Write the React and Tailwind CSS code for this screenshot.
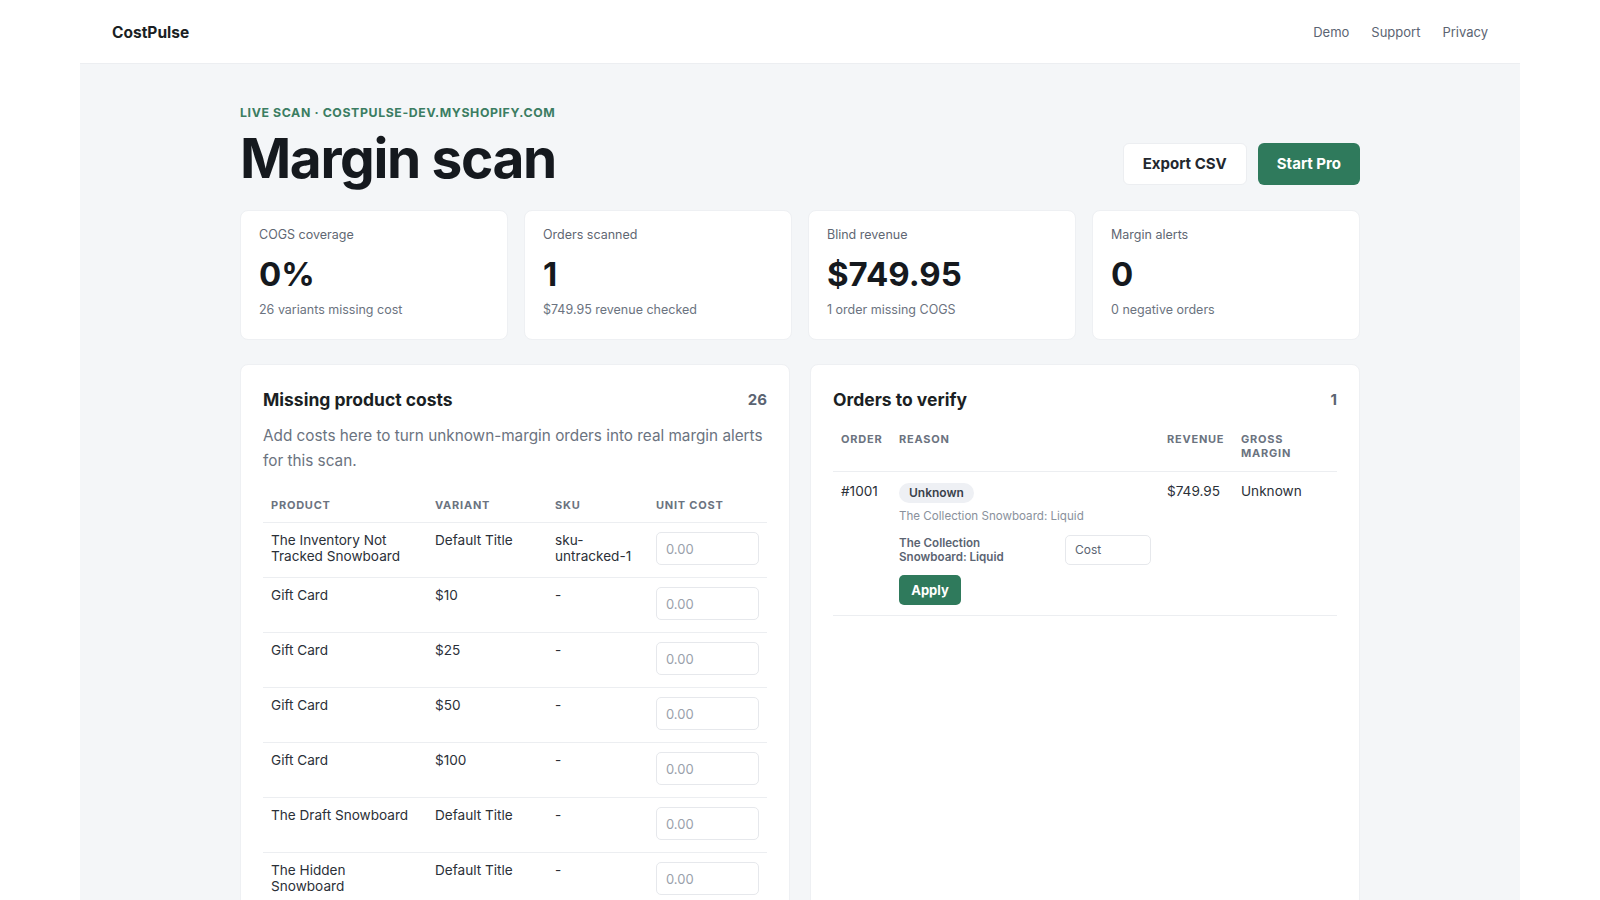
import React from 'react';

const stats = [
  { label: 'COGS coverage', value: '0%', note: '26 variants missing cost' },
  { label: 'Orders scanned', value: '1', note: '$749.95 revenue checked' },
  { label: 'Blind revenue', value: '$749.95', note: '1 order missing COGS' },
  { label: 'Margin alerts', value: '0', note: '0 negative orders' },
];

const products = [
  { product: 'The Inventory Not Tracked Snowboard', variant: 'Default Title', sku: 'sku-untracked-1' },
  { product: 'Gift Card', variant: '$10', sku: '-' },
  { product: 'Gift Card', variant: '$25', sku: '-' },
  { product: 'Gift Card', variant: '$50', sku: '-' },
  { product: 'Gift Card', variant: '$100', sku: '-' },
  { product: 'The Draft Snowboard', variant: 'Default Title', sku: '-' },
  { product: 'The Hidden Snowboard', variant: 'Default Title', sku: '-' },
  { product: 'The Minimal Snowboard', variant: 'Default Title', sku: '-' },
];

function App() {
  return (
    <div className="min-h-screen bg-white font-['Inter','Liberation_Sans',sans-serif] text-[#1b1f24]">
      <div className="max-w-[1440px] mx-auto">
        {/* Top bar */}
        <header className="h-[64px] px-8 flex items-center justify-between border-b border-[#eceef1]">
          <div className="text-[15.5px] font-bold text-[#1b1f24] mt-[2px]">CostPulse</div>
          <nav className="flex items-center gap-[22px] text-[13px] text-[#5b6472] mt-[2px]">
            <span>Demo</span>
            <span>Support</span>
            <span>Privacy</span>
          </nav>
        </header>

        <main className="bg-[#f4f6f8] pt-10 pb-16">
          <div className="max-w-[1120px] mx-auto">
            {/* Title row */}
            <div className="flex items-end justify-between">
              <div>
                <div className="text-[12.3px] font-bold tracking-[0.05em] text-[#3b7d62] uppercase">
                  Live scan · costpulse-dev.myshopify.com
                </div>
                <h1 className="mt-[6px] text-[55px] leading-[60px] font-bold tracking-[-0.025em] text-[#15191e]">
                  Margin scan
                </h1>
              </div>
              <div className="flex items-center gap-[11px] mb-[3px]">
                <button className="h-[42px] px-[19px] rounded-md bg-white border border-[#eceef1] text-[15px] font-bold text-[#23282f]">
                  Export CSV
                </button>
                <button className="h-[42px] px-[19px] rounded-md bg-[#2f7a5c] text-[15px] font-bold text-white">
                  Start Pro
                </button>
              </div>
            </div>

            {/* Stat cards */}
            <div className="mt-[22px] grid grid-cols-4 gap-4">
              {stats.map((s) => (
                <div key={s.label} className="bg-white rounded-lg border border-[#eef0f3] px-[18px] pt-[15px] pb-[20px] h-[130px]">
                  <div className="text-[12.5px] text-[#5f6773]">{s.label}</div>
                  <div className="mt-[10px] text-[33px] leading-[38px] font-bold text-[#15191e]">{s.value}</div>
                  <div className="mt-[8px] text-[12.5px] text-[#6b7380]">{s.note}</div>
                </div>
              ))}
            </div>

            {/* Panels */}
            <div className="mt-6 grid grid-cols-2 gap-5 items-stretch">
              <section className="bg-white rounded-lg border border-[#eef0f3] px-[22px] pt-[22px] pb-6">
                <div className="flex items-center justify-between">
                  <h2 className="text-[17.5px] font-bold text-[#1b1f24]">Missing product costs</h2>
                  <span className="text-[15px] font-bold text-[#5b6472]">26</span>
                </div>
                <p className="mt-[9px] text-[15.3px] leading-[25px] text-[#6b7380]">
                  Add costs here to turn unknown-margin orders into real margin alerts for this scan.
                </p>
                <table className="mt-[24px] w-full text-left border-collapse">
                  <thead>
                    <tr className="border-b border-[#eceef1]">
                      <th className="w-[164px] px-2 pb-[9px] text-[11px] font-bold tracking-[0.07em] text-[#6b7380] uppercase">Product</th>
                      <th className="w-[120px] px-2 pb-[9px] text-[11px] font-bold tracking-[0.07em] text-[#6b7380] uppercase">Variant</th>
                      <th className="w-[101px] px-2 pb-[9px] text-[11px] font-bold tracking-[0.07em] text-[#6b7380] uppercase">SKU</th>
                      <th className="px-2 pb-[9px] text-[11px] font-bold tracking-[0.07em] text-[#6b7380] uppercase">Unit cost</th>
                    </tr>
                  </thead>
                  <tbody>
                    {products.map((p, i) => (
                      <tr key={i} className="border-b border-[#eceef1] align-top text-[13.6px] leading-[16px] text-[#2b3038]">
                        <td className="px-2 pt-[9px] pb-[12px]">{p.product}</td>
                        <td className="px-2 pt-[9px] pb-[12px]">{p.variant}</td>
                        <td className="px-2 pt-[9px] pb-[12px]">
                          {p.sku === 'sku-untracked-1' ? (<>sku-<br />untracked-1</>) : p.sku}
                        </td>
                        <td className="px-2 pt-[9px] pb-[12px]">
                          <input
                            placeholder="0.00"
                            className="w-[103px] h-[33px] rounded-[5px] border border-[#e6e8ec] px-[9px] text-[13px] placeholder:text-[#9aa1ab] outline-none"
                          />
                        </td>
                      </tr>
                    ))}
                  </tbody>
                </table>
              </section>

              <section className="bg-white rounded-lg border border-[#eef0f3] px-[22px] pt-[22px] pb-6">
                <div className="flex items-center justify-between">
                  <h2 className="text-[17.5px] font-bold text-[#1b1f24]">Orders to verify</h2>
                  <span className="text-[15px] font-bold text-[#5b6472]">1</span>
                </div>
                <table className="mt-[18px] w-full text-left border-collapse">
                  <thead>
                    <tr className="border-b border-[#eceef1] align-top">
                      <th className="w-[58px] px-2 pb-[11px] text-[11px] leading-[14px] font-bold tracking-[0.07em] text-[#6b7380] uppercase">Order</th>
                      <th className="px-2 pb-[11px] text-[11px] leading-[14px] font-bold tracking-[0.07em] text-[#6b7380] uppercase">Reason</th>
                      <th className="w-[74px] px-2 pb-[11px] text-[11px] leading-[14px] font-bold tracking-[0.07em] text-[#6b7380] uppercase">Revenue</th>
                      <th className="w-[104px] px-2 pb-[11px] text-[11px] leading-[14px] font-bold tracking-[0.07em] text-[#6b7380] uppercase">Gross<br />margin</th>
                    </tr>
                  </thead>
                  <tbody>
                    <tr className="border-b border-[#eceef1] align-top text-[13.6px] leading-[16px] text-[#2b3038]">
                      <td className="px-2 pt-[11px] pb-[10px]">#1001</td>
                      <td className="px-2 pt-[11px] pb-[10px]">
                        <span className="inline-block rounded-full bg-[#eef0f4] px-[10px] py-[2px] text-[12px] font-semibold text-[#3a414b]">
                          Unknown
                        </span>
                        <div className="mt-[5px] text-[11.6px] text-[#8a919c]">The Collection Snowboard: Liquid</div>
                        <div className="mt-[11px] flex items-center justify-between">
                          <div className="w-[120px] text-[11.6px] leading-[14px] font-semibold text-[#5b6472]">
                            The Collection Snowboard: Liquid
                          </div>
                          <input
                            placeholder="Cost"
                            className="w-[86px] h-[30px] rounded-[5px] border border-[#e6e8ec] px-[9px] text-[12px] placeholder:text-[#5b6472] outline-none"
                          />
                        </div>
                        <button className="mt-[10px] h-[30px] w-[62px] rounded-[5px] bg-[#2f7a5c] text-[13px] font-bold text-white">
                          Apply
                        </button>
                      </td>
                      <td className="px-2 pt-[11px] pb-[10px]">$749.95</td>
                      <td className="px-2 pt-[11px] pb-[10px]">Unknown</td>
                    </tr>
                  </tbody>
                </table>
              </section>
            </div>
          </div>
        </main>
      </div>
    </div>
  );
}

export default App;
